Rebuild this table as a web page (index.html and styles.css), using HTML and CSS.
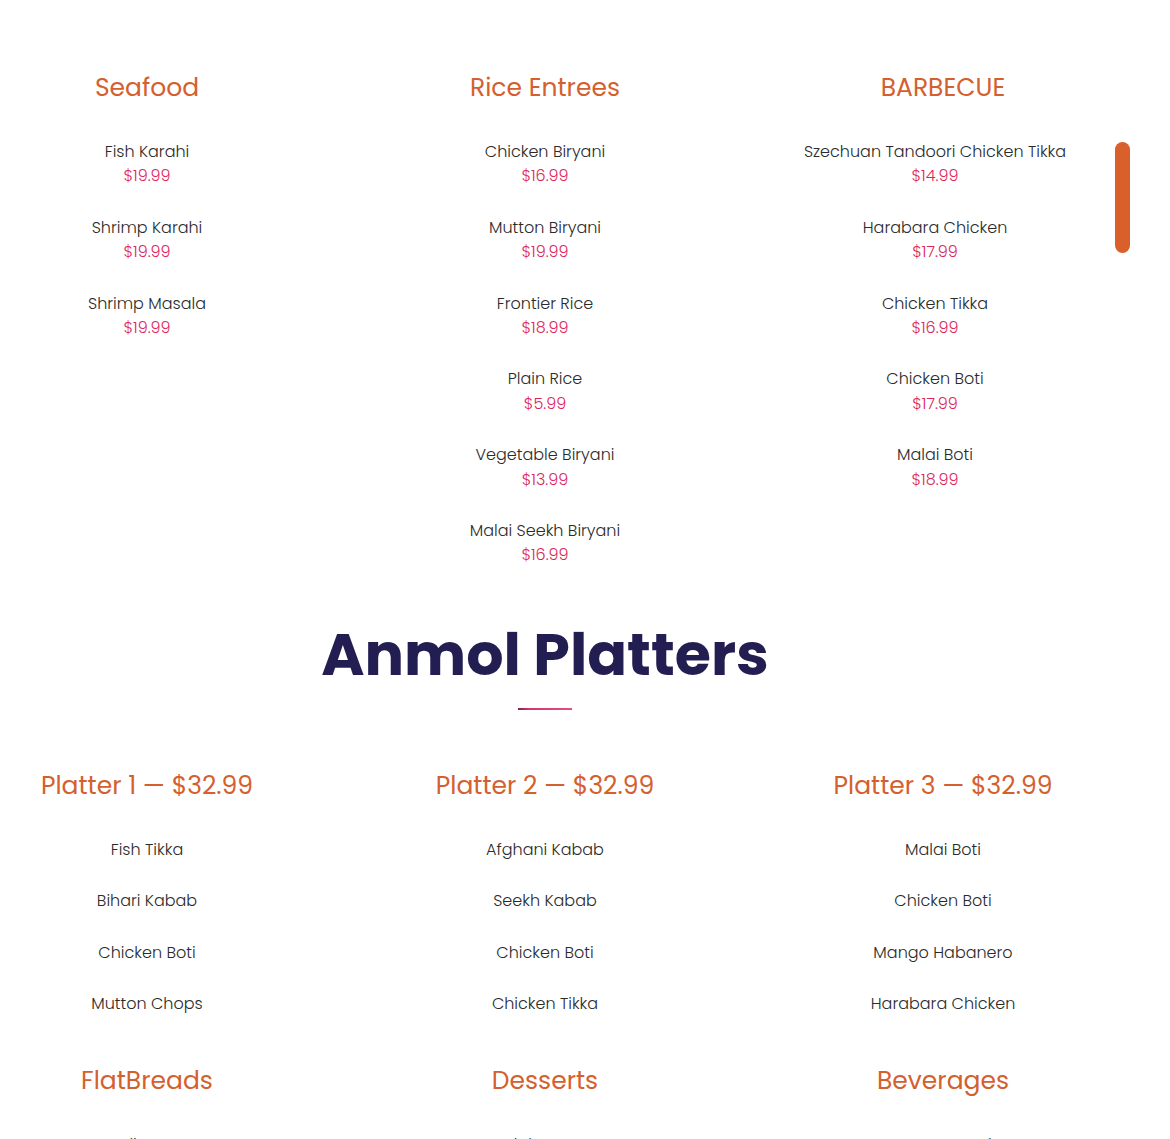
FILE: index.html
```html
<!DOCTYPE html>
<html lang="en">
<head>
<meta charset="utf-8">
<title>Anmol Menu</title>
<link rel="stylesheet" href="styles.css">
</head>
<body>
<main class="page">
  <section class="menu-grid">
    <div class="menu-col">
      <h3 class="cat-title">Seafood</h3>
      <ul class="items">
        <li class="item"><span class="name">Fish Karahi</span><span class="price">$19.99</span></li>
        <li class="item"><span class="name">Shrimp Karahi</span><span class="price">$19.99</span></li>
        <li class="item"><span class="name">Shrimp Masala</span><span class="price">$19.99</span></li>
      </ul>
    </div>
    <div class="menu-col">
      <h3 class="cat-title">Rice Entrees</h3>
      <ul class="items">
        <li class="item"><span class="name">Chicken Biryani</span><span class="price">$16.99</span></li>
        <li class="item"><span class="name">Mutton Biryani</span><span class="price">$19.99</span></li>
        <li class="item"><span class="name">Frontier Rice</span><span class="price">$18.99</span></li>
        <li class="item"><span class="name">Plain Rice</span><span class="price">$5.99</span></li>
        <li class="item"><span class="name">Vegetable Biryani</span><span class="price">$13.99</span></li>
        <li class="item"><span class="name">Malai Seekh Biryani</span><span class="price">$16.99</span></li>
      </ul>
    </div>
    <div class="menu-col">
      <h3 class="cat-title">BARBECUE</h3>
      <div class="scroll-wrap">
        <ul class="items scroll-list">
          <li class="item"><span class="name">Szechuan Tandoori Chicken Tikka</span><span class="price">$14.99</span></li>
          <li class="item"><span class="name">Harabara Chicken</span><span class="price">$17.99</span></li>
          <li class="item"><span class="name">Chicken Tikka</span><span class="price">$16.99</span></li>
          <li class="item"><span class="name">Chicken Boti</span><span class="price">$17.99</span></li>
          <li class="item"><span class="name">Malai Boti</span><span class="price">$18.99</span></li>
          <li class="item"><span class="name">Mango Habanero</span><span class="price">$17.99</span></li>
          <li class="item"><span class="name">Seekh Kabab</span><span class="price">$16.99</span></li>
          <li class="item"><span class="name">Afghani Kabab</span><span class="price">$18.99</span></li>
          <li class="item"><span class="name">Bihari Kabab</span><span class="price">$18.99</span></li>
          <li class="item"><span class="name">Reshmi Kabab</span><span class="price">$17.99</span></li>
          <li class="item"><span class="name">Chapli Kabab</span><span class="price">$17.99</span></li>
          <li class="item"><span class="name">Fish Tikka</span><span class="price">$19.99</span></li>
          <li class="item"><span class="name">Mutton Chops</span><span class="price">$24.99</span></li>
          <li class="item"><span class="name">Lamb Chops</span><span class="price">$26.99</span></li>
          <li class="item"><span class="name">Tandoori Chicken</span><span class="price">$15.99</span></li>
          <li class="item"><span class="name">Mixed Grill</span><span class="price">$29.99</span></li>
        </ul>
        <span class="scroll-thumb" aria-hidden="true"></span>
      </div>
    </div>
  </section>

  <header class="section-head">
    <h2 class="section-title">Anmol Platters</h2>
    <span class="divider"></span>
  </header>

  <section class="menu-grid">
    <div class="menu-col">
      <h3 class="cat-title">Platter 1 — $32.99</h3>
      <ul class="items">
        <li class="item"><span class="name">Fish Tikka</span></li>
        <li class="item"><span class="name">Bihari Kabab</span></li>
        <li class="item"><span class="name">Chicken Boti</span></li>
        <li class="item"><span class="name">Mutton Chops</span></li>
      </ul>
    </div>
    <div class="menu-col">
      <h3 class="cat-title">Platter 2 — $32.99</h3>
      <ul class="items">
        <li class="item"><span class="name">Afghani Kabab</span></li>
        <li class="item"><span class="name">Seekh Kabab</span></li>
        <li class="item"><span class="name">Chicken Boti</span></li>
        <li class="item"><span class="name">Chicken Tikka</span></li>
      </ul>
    </div>
    <div class="menu-col">
      <h3 class="cat-title">Platter 3 — $32.99</h3>
      <ul class="items">
        <li class="item"><span class="name">Malai Boti</span></li>
        <li class="item"><span class="name">Chicken Boti</span></li>
        <li class="item"><span class="name">Mango Habanero</span></li>
        <li class="item"><span class="name">Harabara Chicken</span></li>
      </ul>
    </div>

    <div class="menu-col">
      <h3 class="cat-title">FlatBreads</h3>
      <ul class="items">
        <li class="item"><span class="name">Garlic Naan</span><span class="price">$3.99</span></li>
        <li class="item"><span class="name">Plain Naan</span><span class="price">$2.49</span></li>
      </ul>
    </div>
    <div class="menu-col">
      <h3 class="cat-title">Desserts</h3>
      <ul class="items">
        <li class="item"><span class="name">Gulab Jamun</span><span class="price">$5.99</span></li>
        <li class="item"><span class="name">Rice Kheer</span><span class="price">$5.99</span></li>
      </ul>
    </div>
    <div class="menu-col">
      <h3 class="cat-title">Beverages</h3>
      <ul class="items">
        <li class="item"><span class="name">Mango Lassi</span><span class="price">$4.99</span></li>
        <li class="item"><span class="name">Soft Drink</span><span class="price">$1.99</span></li>
      </ul>
    </div>
  </section>
</main>
</body>
</html>
```

FILE: styles.css
```css
html, body {
  margin: 0;
  padding: 0;
  background: #ffffff;
}

body {
  font-family: "Poppins", "Inter", "Noto Sans", sans-serif;
  color: #333333;
  overflow-x: hidden;
}

.page {
  width: 1172px;
  margin-left: -41px;
  padding-top: 72px;
}

.menu-grid {
  display: grid;
  grid-template-columns: repeat(3, 376px);
  column-gap: 22px;
  row-gap: 21px;
}

.menu-col {
  display: flex;
  flex-direction: column;
  align-items: stretch;
  text-align: center;
}

.cat-title {
  margin: 0 0 37px;
  font-size: 25px;
  line-height: 31px;
  font-weight: 400;
  color: #d4602e;
}

.items {
  list-style: none;
  margin: 0;
  padding: 0;
}

.item {
  display: flex;
  flex-direction: column;
  align-items: center;
  margin-bottom: 27px;
  font-size: 16px;
  line-height: 24.4px;
}

.name {
  font-weight: 300;
  color: #2b2b2b;
}

.price {
  font-weight: 300;
  color: #dc2658;
}

.scroll-wrap {
  position: relative;
}

.scroll-list {
  height: 370px;
  overflow: hidden;
  padding-right: 16px;
}

.scroll-thumb {
  position: absolute;
  top: 2px;
  right: 1px;
  width: 15px;
  height: 111px;
  border-radius: 8px;
  background: #d95f2b;
}

.section-head {
  display: flex;
  flex-direction: column;
  align-items: center;
  padding: 20px 0 60px;
}

.section-title {
  margin: 0;
  font-size: 58.7px;
  line-height: 80px;
  font-weight: 700;
  color: #231e52;
}

.divider {
  display: block;
  width: 54px;
  height: 2px;
  margin-top: 13px;
  background: linear-gradient(90deg, #7a2258, #d6356a 20%, #e0517f);
}
```
